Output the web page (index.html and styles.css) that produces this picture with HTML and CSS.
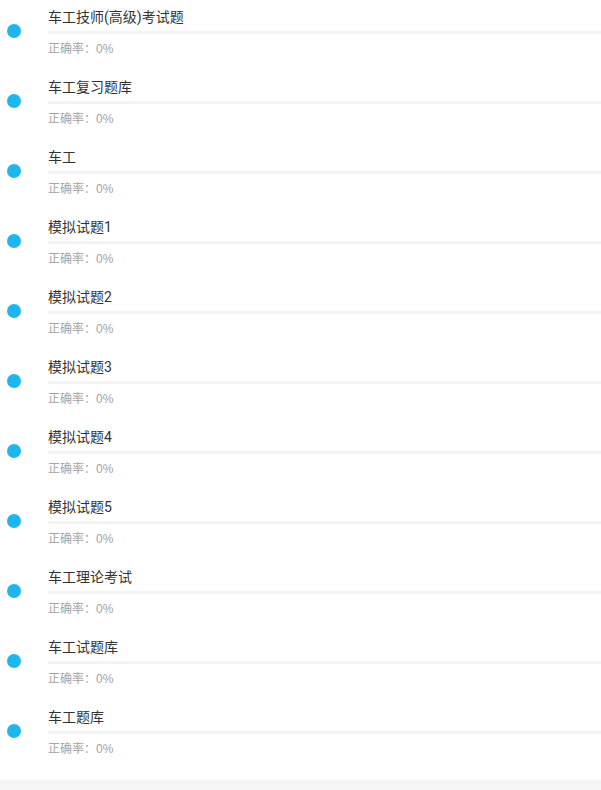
FILE: index.html
```html
<!DOCTYPE html>
<html lang="zh-CN">
<head>
  <meta charset="UTF-8">
  <meta name="viewport" content="width=device-width, initial-scale=1.0">
  <title>车工题库</title>
  <link rel="stylesheet" href="styles.css">
</head>
<body>

  <div class="list">
    <div class="item"><span class="dot"></span><div class="info"><div class="name">车工技师(高级)考试题</div><div class="bar"></div><div class="rate">正确率：0%</div></div></div>
    <div class="item"><span class="dot"></span><div class="info"><div class="name">车工复习题库</div><div class="bar"></div><div class="rate">正确率：0%</div></div></div>
    <div class="item"><span class="dot"></span><div class="info"><div class="name">车工</div><div class="bar"></div><div class="rate">正确率：0%</div></div></div>
    <div class="item"><span class="dot"></span><div class="info"><div class="name">模拟试题1</div><div class="bar"></div><div class="rate">正确率：0%</div></div></div>
    <div class="item"><span class="dot"></span><div class="info"><div class="name">模拟试题2</div><div class="bar"></div><div class="rate">正确率：0%</div></div></div>
    <div class="item"><span class="dot"></span><div class="info"><div class="name">模拟试题3</div><div class="bar"></div><div class="rate">正确率：0%</div></div></div>
    <div class="item"><span class="dot"></span><div class="info"><div class="name">模拟试题4</div><div class="bar"></div><div class="rate">正确率：0%</div></div></div>
    <div class="item"><span class="dot"></span><div class="info"><div class="name">模拟试题5</div><div class="bar"></div><div class="rate">正确率：0%</div></div></div>
    <div class="item"><span class="dot"></span><div class="info"><div class="name">车工理论考试</div><div class="bar"></div><div class="rate">正确率：0%</div></div></div>
    <div class="item"><span class="dot"></span><div class="info"><div class="name">车工试题库</div><div class="bar"></div><div class="rate">正确率：0%</div></div></div>
    <div class="item"><span class="dot"></span><div class="info"><div class="name">车工题库</div><div class="bar"></div><div class="rate">正确率：0%</div></div></div>
  </div>

  <div class="footer"></div>

</body>
</html>
```

FILE: styles.css
```css
body {
  margin: 0;
  padding: 0;
  background: #fff;
  font-family: Roboto, "Noto Sans CJK SC", sans-serif;
}

.list { padding-bottom: 10px; }

.item {
  display: flex;
  height: 70px;
  box-sizing: border-box;
  padding-top: 7px;
}

.dot {
  width: 14px;
  height: 14px;
  border-radius: 50%;
  background: #1fb6ee;
  margin: 17px 27px 0 7px;
  flex-shrink: 0;
}

.info { flex: 1; }

.name {
  font-size: 14px;
  line-height: 20px;
  color: #333;
}

.bar {
  height: 3px;
  background: #f4f4f4;
  margin-top: 4px;
}

.rate {
  font-family: "Liberation Sans", "Noto Sans CJK SC", sans-serif;
  font-size: 12px;
  line-height: 16px;
  color: #a3a3a3;
  margin-top: 7px;
}

.footer {
  height: 20px;
  background: #f5f5f5;
}
```
